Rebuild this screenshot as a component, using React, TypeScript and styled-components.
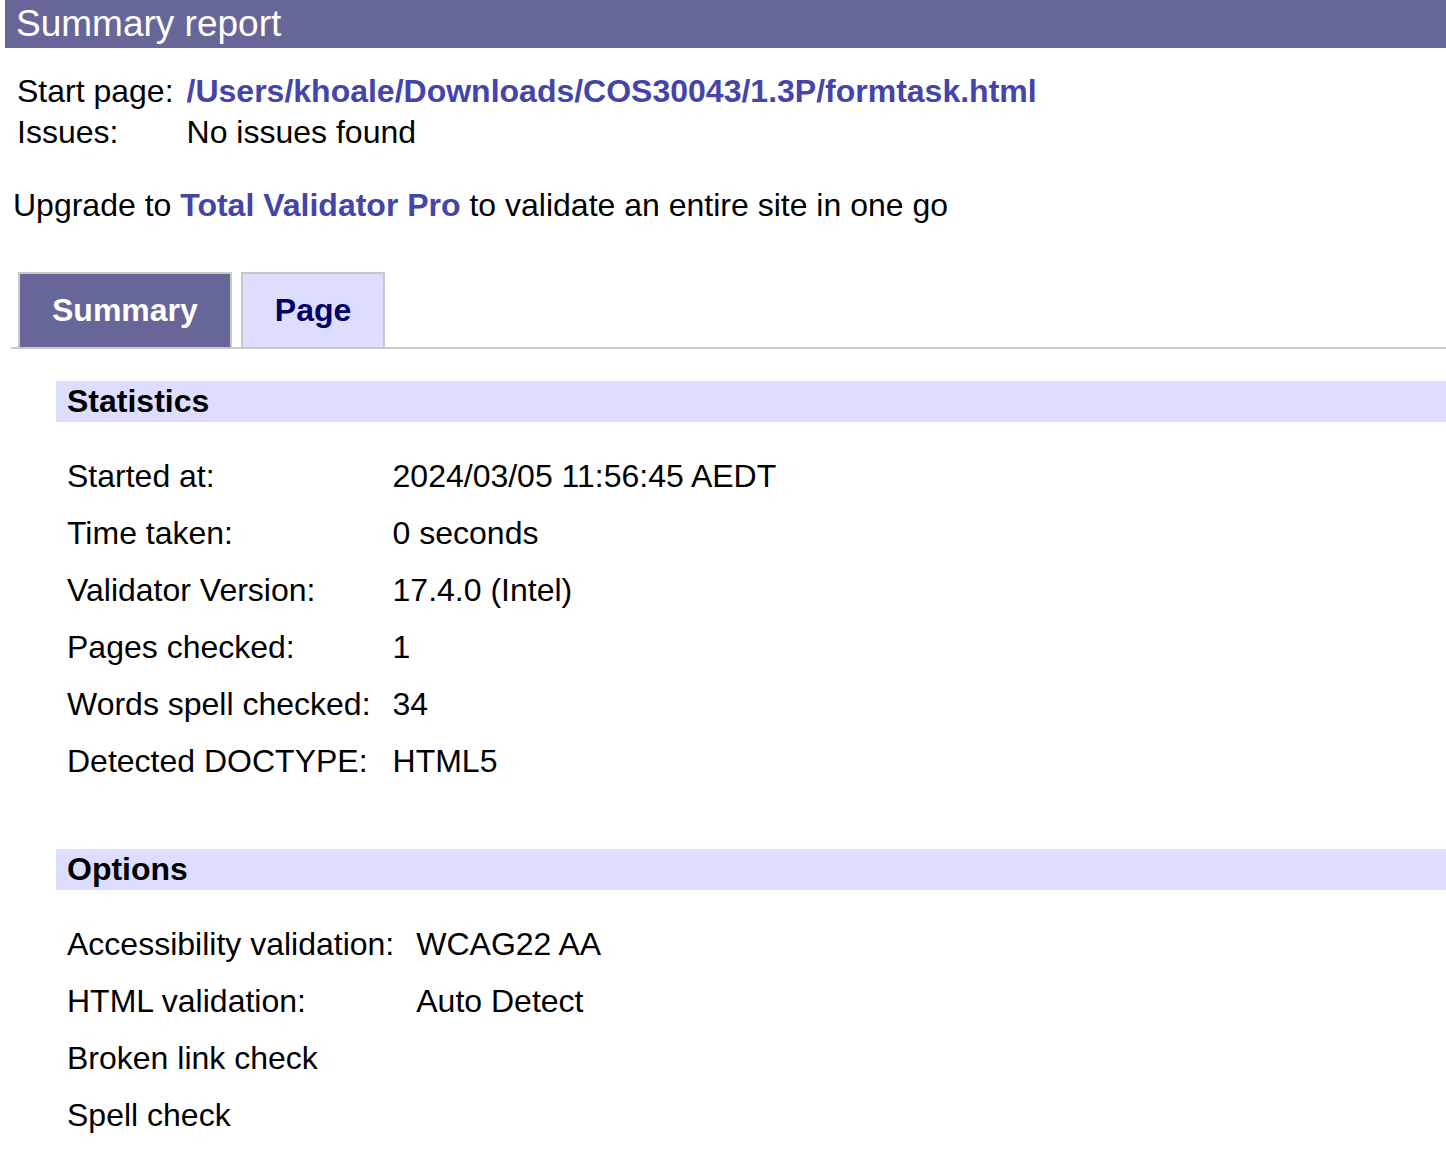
import React from "react";
import styled, { createGlobalStyle } from "styled-components";

const GlobalStyle = createGlobalStyle`
  body {
    margin: 0;
    background: #ffffff;
    color: #000000;
    font-family: "Liberation Sans", Arial, Helvetica, sans-serif;
    font-size: 32px;
  }
`;

const TitleBar = styled.h1`
  margin: 0 0 0 5px;
  height: 48px;
  line-height: 48px;
  padding-left: 11px;
  background-color: #666699;
  color: #ffffff;
  font-size: 37px;
  font-weight: normal;
`;

const InfoGrid = styled.div`
  display: grid;
  grid-template-columns: auto 1fr;
  column-gap: 13px;
  margin-top: 23px;
  padding-left: 17px;
  line-height: 41px;
`;

const Link = styled.a`
  color: #4444aa;
  font-weight: bold;
  text-decoration: none;
`;

const Upgrade = styled.p`
  margin: 32px 0 0;
  padding-left: 13px;
  line-height: 41px;
`;

const TabBar = styled.div`
  display: flex;
  align-items: flex-end;
  gap: 9px;
  margin: 46px 0 0 11px;
  padding-left: 7px;
  border-bottom: 2px solid #c8c8c8;
`;

const Tab = styled.div<{ active?: boolean }>`
  height: 73px;
  line-height: 73px;
  padding: 0 32px;
  border: 2px solid #c8c8c8;
  border-bottom: none;
  background-color: ${({ active }) => (active ? `#666699` : `#ddddff`)};
  color: ${({ active }) => (active ? `#ffffff` : `#000066`)};
  font-weight: bold;
`;

const Section = styled.section`
  margin-left: 56px;
`;

const SectionTitle = styled.h2<{ first?: boolean }>`
  margin: ${({ first }) => (first ? `32px` : `59px`)} 0 0;
  height: 41px;
  line-height: 41px;
  padding-left: 11px;
  background-color: #ddddff;
  font-size: 32px;
  font-weight: bold;
`;

const Table = styled.table`
  margin: 26px 0 0 11px;
  border-collapse: collapse;
  border-spacing: 0;
  font-size: 32px;
`;

const Row = styled.tr`
  height: 57px;
  line-height: 57px;
`;

const Label = styled.td`
  padding: 0 22px 0 0;
  white-space: nowrap;
`;

const Value = styled.td`
  padding: 0;
  white-space: nowrap;
`;

const statistics: [string, string][] = [
  [`Started at:`, `2024/03/05 11:56:45 AEDT`],
  [`Time taken:`, `0 seconds`],
  [`Validator Version:`, `17.4.0 (Intel)`],
  [`Pages checked:`, `1`],
  [`Words spell checked:`, `34`],
  [`Detected DOCTYPE:`, `HTML5`],
];

const options: [string, string][] = [
  [`Accessibility validation:`, `WCAG22 AA`],
  [`HTML validation:`, `Auto Detect`],
  [`Broken link check`, ``],
  [`Spell check`, ``],
];

const DataTable = ({ rows }: { rows: [string, string][] }) => (
  <Table>
    <tbody>
      {rows.map(([label, value]) => (
        <Row key={label}>
          <Label>{label}</Label>
          <Value>{value}</Value>
        </Row>
      ))}
    </tbody>
  </Table>
);

export default function App() {
  return (
    <>
      <GlobalStyle />
      <TitleBar>Summary report</TitleBar>
      <InfoGrid>
        <span>Start page:</span>
        <span>
          <Link href="#">/Users/khoale/Downloads/COS30043/1.3P/formtask.html</Link>
        </span>
        <span>Issues:</span>
        <span>No issues found</span>
      </InfoGrid>
      <Upgrade>
        Upgrade to <Link href="#">Total Validator Pro</Link> to validate an
        entire site in one go
      </Upgrade>
      <TabBar>
        <Tab active>Summary</Tab>
        <Tab>Page</Tab>
      </TabBar>
      <Section>
        <SectionTitle first>Statistics</SectionTitle>
        <DataTable rows={statistics} />
        <SectionTitle>Options</SectionTitle>
        <DataTable rows={options} />
      </Section>
    </>
  );
}
